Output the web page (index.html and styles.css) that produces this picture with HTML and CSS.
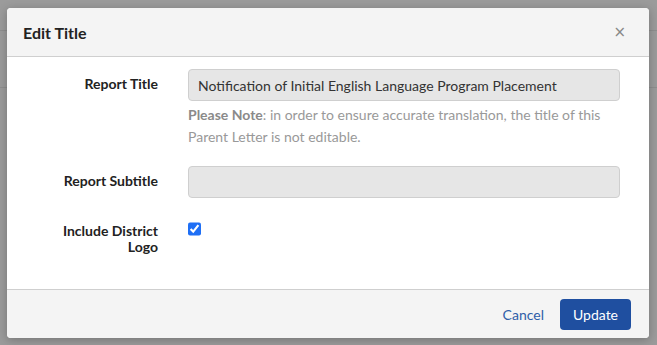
FILE: index.html
```html
<!DOCTYPE html>
<html lang="en">
<head>
    <meta charset="UTF-8">
    <meta name="viewport" content="width=device-width, initial-scale=1.0">
    <title>Edit Title</title>
    <link rel="stylesheet" href="styles.css">
</head>
<body>
    <div class="backdrop">
        <div class="page-line line-top"></div>
        <div class="page-line line-bottom"></div>
        <div class="modal">
            <div class="modal-header">
                <h2>Edit Title</h2>
                <button class="close-btn" type="button">&times;</button>
            </div>
            <form class="modal-body">
                <label class="field-label" for="reportTitle">Report Title</label>
                <div class="field">
                    <input type="text" id="reportTitle" value="Notification of Initial English Language Program Placement" disabled>
                    <p class="help-text"><strong>Please Note</strong>: in order to ensure accurate translation, the title of this Parent Letter is not editable.</p>
                </div>

                <label class="field-label" for="reportSubtitle">Report Subtitle</label>
                <div class="field">
                    <input type="text" id="reportSubtitle" disabled>
                </div>

                <label class="field-label" for="includeLogo">Include District Logo</label>
                <div class="field">
                    <input type="checkbox" id="includeLogo" checked>
                </div>
            </form>
            <div class="modal-footer">
                <a href="#" class="cancel-link">Cancel</a>
                <button type="button" class="update-btn">Update</button>
            </div>
        </div>
    </div>
</body>
</html>
```

FILE: styles.css
```css
html, body {
    margin: 0;
    height: 100%;
}

body {
    font-family: 'Lato', 'Open Sans', sans-serif;
    background-color: #9b9b9b;
}

.backdrop {
    position: relative;
    height: 100%;
    padding: 8px 8px 0 7px;
    box-sizing: border-box;
}

/* faint lines of the page behind the overlay */
.page-line {
    position: absolute;
    left: 0;
    right: 0;
    height: 1px;
    background-color: #8e8e8e;
}

.line-top {
    top: 30px;
}

.line-bottom {
    top: 87px;
}

.modal {
    position: relative;
    width: 642px;
    background-color: #ffffff;
    border-radius: 4px;
    box-shadow: 0 2px 10px rgba(0, 0, 0, 0.25);
    overflow: hidden;
}

.modal-header {
    display: flex;
    align-items: center;
    justify-content: space-between;
    height: 48px;
    padding: 0 23px 0 16px;
    background-color: #f4f4f4;
    border-bottom: 1px solid #cfcfcf;
}

.modal-header h2 {
    margin: 0;
    font-size: 16px;
    font-weight: bold;
    color: #222;
}

.close-btn {
    border: none;
    background: none;
    padding: 0;
    font-family: 'DejaVu Sans', sans-serif;
    font-size: 15px;
    color: #888;
    cursor: pointer;
}

.modal-body {
    display: grid;
    grid-template-columns: 101px 1fr;
    column-gap: 30px;
    row-gap: 18px;
    align-items: start;
    margin: 0;
    padding: 12px 29px 34px 50px;
}

.field-label {
    text-align: right;
    font-size: 14px;
    font-weight: bold;
    line-height: 16px;
    color: #222;
    padding-top: 7px;
}

.field input[type="text"] {
    display: block;
    width: 100%;
    height: 32px;
    padding: 0 9px;
    font-family: inherit;
    font-size: 14px;
    color: #333;
    background-color: #e6e6e6;
    border: 1px solid #cfcfcf;
    border-radius: 4px;
    box-sizing: border-box;
}

.help-text {
    margin: 3px 0 0;
    font-size: 14px;
    line-height: 22px;
    color: #999;
}

.help-text strong {
    color: #8a8a8a;
}

.field input[type="checkbox"] {
    width: 13px;
    height: 14px;
    margin: 6px 0 0;
    accent-color: #1f6ff5;
}

.modal-footer {
    display: flex;
    align-items: center;
    justify-content: flex-end;
    gap: 16px;
    height: 48px;
    padding: 0 18px;
    background-color: #f4f4f4;
    border-top: 1px solid #cfcfcf;
}

.cancel-link {
    font-size: 14px;
    color: #2f5ea8;
    text-decoration: none;
}

.update-btn {
    width: 71px;
    height: 31px;
    font-family: inherit;
    font-size: 14px;
    color: #ffffff;
    background-color: #1f4fa0;
    border: none;
    border-radius: 4px;
    cursor: pointer;
}
```
